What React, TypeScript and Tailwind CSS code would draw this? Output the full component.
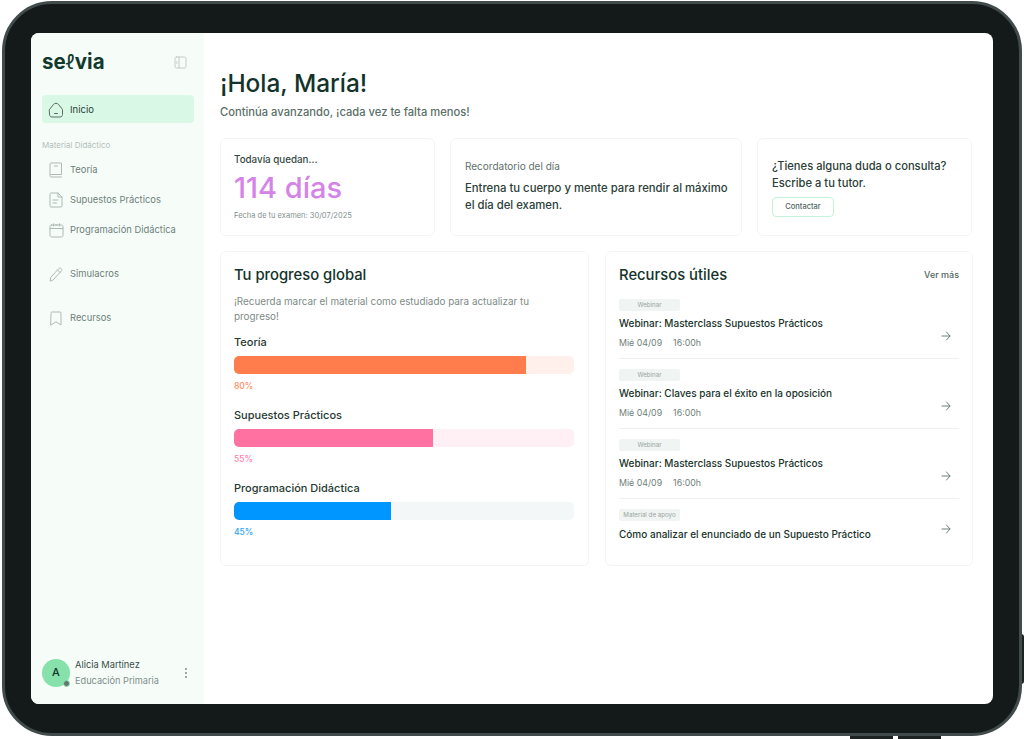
const font = { fontFamily: "Inter, 'Noto Sans', sans-serif" };

const iconProps = {
  fill: "none",
  stroke: "currentColor",
  strokeWidth: 1,
  strokeLinecap: "round" as const,
  strokeLinejoin: "round" as const,
};

const HomeIcon = () => (
  <svg width="16" height="16" viewBox="0 0 16 16" {...iconProps}>
    <path d="M1.5 7.5L5.5 2.4C7 0.9 9 0.9 10.5 2.4L14.5 7.5V12.5C14.5 14 13.5 15 12 15H4C2.5 15 1.5 14 1.5 12.5Z" />
    <path d="M6.5 11.5H9.5" />
  </svg>
);

const BookIcon = () => (
  <svg width="14" height="16" viewBox="0 0 14 16" {...iconProps}>
    <path d="M1 12.5V2C1 1.4 1.4 1 2 1H12.5V12.5H2C1.4 12.5 1 13 1 13.6C1 14.4 1.4 15 2 15H12.5" />
    <path d="M5.5 4H8.5" />
  </svg>
);

const DocIcon = () => (
  <svg width="14" height="16" viewBox="0 0 14 16" {...iconProps}>
    <path d="M1 2C1 1.4 1.4 1 2 1H9L13 5V14C13 14.6 12.6 15 12 15H2C1.4 15 1 14.6 1 14Z" />
    <path d="M9 1V5H13M4 8H9M4 11H7.5" />
  </svg>
);

const CalendarIcon = () => (
  <svg width="15" height="15" viewBox="0 0 15 15" {...iconProps}>
    <path d="M2.5 2H12.5C13.4 2 14 2.6 14 3.5V12.5C14 13.4 13.4 14 12.5 14H2.5C1.6 14 1 13.4 1 12.5V3.5C1 2.6 1.6 2 2.5 2Z" />
    <path d="M1 5.5H14M4.5 0.8V3M10.5 0.8V3M6.5 2H8.5" />
  </svg>
);

const PencilIcon = () => (
  <svg width="14" height="15" viewBox="0 0 14 15" {...iconProps}>
    <path d="M1.2 13.8L1.8 10.2L9.8 1.6C10.5 0.9 11.5 0.9 12.2 1.6C12.9 2.3 12.9 3.3 12.3 4L4.4 12.7Z" />
    <path d="M8.6 3L11 5.4" />
  </svg>
);

const BookmarkIcon = () => (
  <svg width="12" height="15" viewBox="0 0 12 15" {...iconProps}>
    <path d="M1 2C1 1.4 1.4 1 2 1H10C10.6 1 11 1.4 11 2V14L6 10.8L1 14Z" />
  </svg>
);

const PanelIcon = () => (
  <svg width="13" height="13" viewBox="0 0 13 13" {...iconProps} stroke="#c4cbc8">
    <rect x="1" y="1" width="11" height="11" rx="1.5" />
    <path d="M5 1V12M3 5.5L2.5 6.5L3 7.5" />
  </svg>
);

const ArrowIcon = () => (
  <svg width="10" height="10" viewBox="0 0 10 10" {...iconProps} stroke="#6f7f7a">
    <path d="M1 5H9M5.5 1L9 5L5.5 9" />
  </svg>
);

const Card = ({ className, children }: { className: string; children: React.ReactNode }) => (
  <div className={`rounded-md border border-[#f3f5f4] bg-white ${className}`}>{children}</div>
);

const navItems = [
  { label: "Teoría", icon: <BookIcon />, className: "mt-[8px]" },
  { label: "Supuestos Prácticos", icon: <DocIcon />, className: "mt-[8px]" },
  { label: "Programación Didáctica", icon: <CalendarIcon />, className: "mt-[8px]" },
  { label: "Simulacros", icon: <PencilIcon />, className: "mt-[22px]" },
  { label: "Recursos", icon: <BookmarkIcon />, className: "mt-[22px]" },
];

const progress = [
  { label: "Teoría", value: "80%", width: "w-[292px]", bar: "bg-[#ff7d4d]", track: "bg-[#fff0eb]", text: "text-[#ff8a5f]" },
  { label: "Supuestos Prácticos", value: "55%", width: "w-[199px]", bar: "bg-[#ff71a0]", track: "bg-[#fef0f4]", text: "text-[#ff7fa9]" },
  { label: "Programación Didáctica", value: "45%", width: "w-[157px]", bar: "bg-[#0096ff]", track: "bg-[#f3f7f8]", text: "text-[#2aa3f7]" },
];

const resources = [
  { tag: "Webinar", title: "Webinar: Masterclass Supuestos Prácticos", date: true },
  { tag: "Webinar", title: "Webinar: Claves para el éxito en la oposición", date: true },
  { tag: "Webinar", title: "Webinar: Masterclass Supuestos Prácticos", date: true },
  { tag: "Material de apoyo", title: "Cómo analizar el enunciado de un Supuesto Práctico", date: false },
];

export default function App() {
  return (
    <div className="relative h-[739px] w-[1024px] overflow-hidden bg-white" style={font}>
      {/* side and bottom buttons of the tablet */}
      <div className="absolute right-0 top-[634px] h-[50px] w-[3px] rounded-r-sm bg-[#1d2222]" />
      <div className="absolute bottom-0 left-[850px] h-[4px] w-[43px] bg-[#1d2222]" />
      <div className="absolute bottom-0 left-[898px] h-[4px] w-[43px] bg-[#1d2222]" />

      <div className="absolute left-[2px] top-[1px] h-[735px] w-[1020px] rounded-[50px] border-[3px] border-[#414b4b] bg-[#141919] px-[26px] pb-[29px] pt-[29px]">
        <div className="flex h-[671px] w-[962px] overflow-hidden rounded-lg bg-white">
          {/* Sidebar */}
          <aside className="flex w-[173px] shrink-0 flex-col bg-[#f6fdf9] pl-[11px] pr-[10px]">
            <div className="mb-[4px] flex h-[58px] items-center justify-between pr-[7px]">
              <span className="text-[20.5px] font-bold leading-none text-[#12392d]">
                se<span className="font-normal">ℓ</span>via
              </span>
              <PanelIcon />
            </div>

            <div className="flex h-[28px] items-center gap-[6px] rounded bg-[#d9f8e6] pl-[6px] text-[9.5px] text-[#2b403a]">
              <span className="flex w-[16px] justify-center pt-[1px] text-[#5b6b66]">
                <HomeIcon />
              </span>
              <span className="pt-[3px]">Inicio</span>
            </div>

            <div className="mt-[17px] text-[8px] leading-[11px] text-[#b4bdb9]">Material Didáctico</div>

            {navItems.map((item) => (
              <div
                key={item.label}
                className={`flex h-[22px] items-center gap-[6px] pl-[6px] text-[9.4px] text-[#6f7f7a] ${item.className}`}
              >
                <span className="flex w-[16px] justify-center text-[#b0b9b6]">{item.icon}</span>
                <span className="pt-[1px]">{item.label}</span>
              </div>
            ))}

            <div className="mt-auto flex items-center pb-[15px]">
              <div className="relative flex h-[28px] w-[28px] shrink-0 items-center justify-center rounded-full bg-[#86e1ab] text-[11px] font-medium text-[#12332a]">
                A
                <span className="absolute bottom-0 right-0 h-[7px] w-[7px] rounded-full border border-[#86e1ab] bg-[#65766f]" />
              </div>
              <div className="ml-[5px] flex-1 pt-[1px]">
                <div className="text-[9.3px] leading-[16px] text-[#3a4e48]">Alicia Martínez</div>
                <div className="text-[9.2px] leading-[16px] text-[#7f8d89]">Educación Primaria</div>
              </div>
              <div className="mr-[7px] flex flex-col gap-[2px]">
                <span className="h-[2px] w-[2px] rounded-full bg-[#7f8d89]" />
                <span className="h-[2px] w-[2px] rounded-full bg-[#7f8d89]" />
                <span className="h-[2px] w-[2px] rounded-full bg-[#7f8d89]" />
              </div>
            </div>
          </aside>

          {/* Main */}
          <main className="flex-1 pl-[16px] pr-[20px] pt-[34px]">
            <h1 className="text-[24.4px] font-medium leading-[32px] text-[#12332a]">¡Hola, María!</h1>
            <p className="mt-[5px] text-[11.2px] font-medium leading-[16px] text-[#5a6f68]">
              Continúa avanzando, ¡cada vez te falta menos!
            </p>

            <div className="mt-[18px] flex gap-[15px]">
              <Card className="h-[98px] w-[215px] px-[13px] pt-[14px]">
                <div className="text-[9.8px] font-medium leading-[14px] text-[#34483f]">Todavía quedan...</div>
                <div className="mt-[4px] text-[29px] font-medium leading-[34px] text-[#d583e8]">114 días</div>
                <div className="mt-[6px] text-[7.5px] leading-[10px] text-[#83918d]">Fecha de tu examen: 30/07/2025</div>
              </Card>
              <Card className="h-[98px] w-[292px] pl-[14px] pt-[20px]">
                <div className="text-[10px] leading-[14px] text-[#5d716b]">Recordatorio del día</div>
                <div className="mt-[7px] whitespace-nowrap text-[11.3px] font-medium leading-[17px] text-[#2b4038]">
                  Entrena tu cuerpo y mente para rendir al máximo
                  <br />
                  el día del examen.
                </div>
              </Card>
              <Card className="h-[98px] w-[215px] px-[14px] pt-[19px]">
                <div className="whitespace-nowrap text-[11.2px] font-medium leading-[17px] text-[#2b4038]">
                  ¿Tienes alguna duda o consulta?
                  <br />
                  Escribe a tu tutor.
                </div>
                <div className="mt-[5px] flex h-[20px] w-[62px] items-center justify-center rounded border border-[#c6f2d9] text-[7.5px] font-medium text-[#50665f]">
                  Contactar
                </div>
              </Card>
            </div>

            <div className="mt-[15px] flex gap-[16px]">
              <Card className="h-[315px] w-[369px] px-[13px] pt-[13px]">
                <h2 className="text-[14.8px] font-medium leading-[20px] text-[#12332a]">Tu progreso global</h2>
                <p className="mt-[9px] text-[9.9px] leading-[15px] text-[#7d8b87]">
                  ¡Recuerda marcar el material como estudiado para actualizar tu progreso!
                </p>
                <div className="mt-[11px] flex flex-col gap-[16px]">
                  {progress.map((p) => (
                    <div key={p.label}>
                      <div className="text-[11px] font-medium leading-[14px] text-[#1f3a31]">{p.label}</div>
                      <div className={`mt-[7px] h-[18px] w-[340px] overflow-hidden rounded-[5px] ${p.track}`}>
                        <div className={`h-full ${p.width} ${p.bar}`} />
                      </div>
                      <div className={`mt-[6px] text-[8.5px] font-medium leading-[12px] ${p.text}`}>{p.value}</div>
                    </div>
                  ))}
                </div>
              </Card>

              <Card className="h-[315px] w-[368px] px-[13px] pt-[13px]">
                <div className="flex items-center justify-between">
                  <h2 className="text-[14.8px] font-medium leading-[20px] text-[#12332a]">Recursos útiles</h2>
                  <span className="text-[9px] font-medium text-[#50665f]">Ver más</span>
                </div>
                <div className="mt-[4px]">
                  {resources.map((r) => (
                    <div
                      key={r.title + r.tag + String(r.date)}
                      className={`flex justify-between border-[#eef1f0] ${r.date ? "h-[70px] border-b" : "h-[60px]"}`}
                    >
                      <div className="pt-[10px]">
                        <div className="flex h-[12px] w-[61px] items-center justify-center rounded-[2px] bg-[#f0f4f2] text-[6.2px] text-[#98a4a0]">
                          {r.tag}
                        </div>
                        <div className={`text-[10px] font-medium leading-[14px] text-[#17332a] ${r.date ? "mt-[5px]" : "mt-[6px]"}`}>
                          {r.title}
                        </div>
                        {r.date && (
                          <div className="mt-[6px] flex gap-[11px] text-[8.8px] leading-[14px] text-[#6f7f7a]">
                            <span>Mié 04/09</span>
                            <span>16:00h</span>
                          </div>
                        )}
                      </div>
                      <span className={`mr-[8px] self-center ${r.date ? "mt-[24px]" : ""}`}>
                        <ArrowIcon />
                      </span>
                    </div>
                  ))}
                </div>
              </Card>
            </div>
          </main>
        </div>
      </div>
    </div>
  );
}
